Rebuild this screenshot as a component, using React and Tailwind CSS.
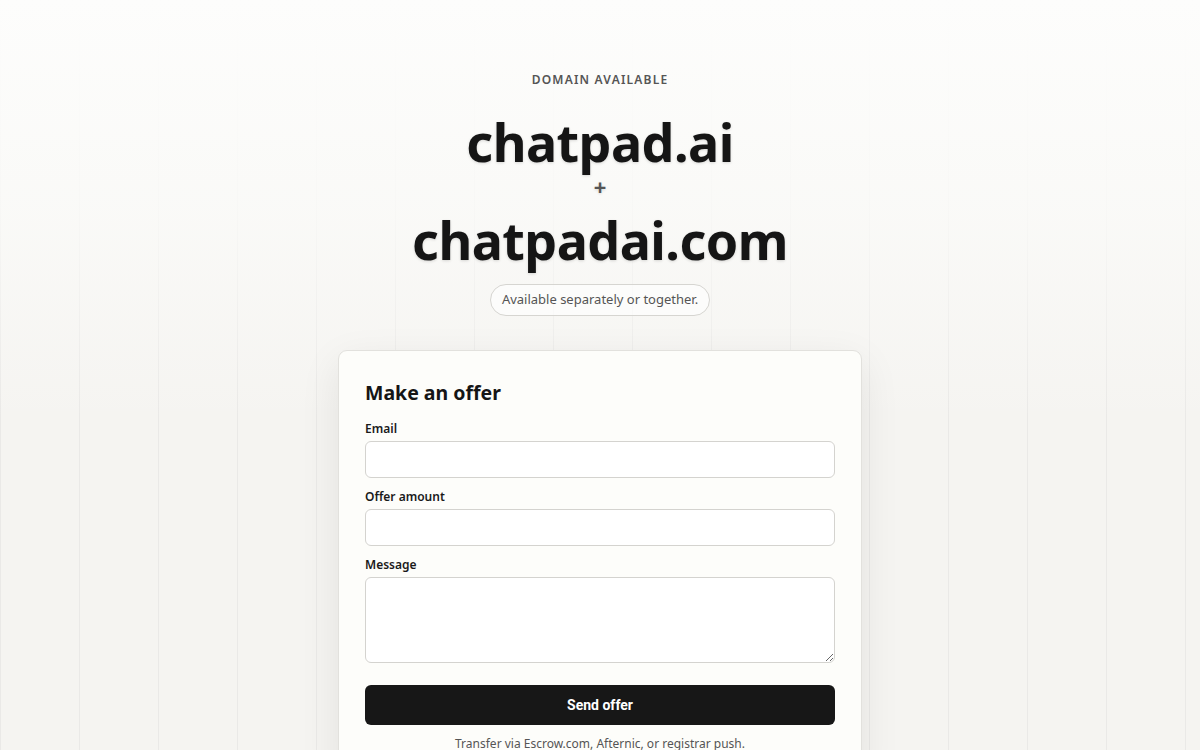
import React from 'react';

const Field = ({ label, children }) => (
    <div className="flex flex-col">
        <label className="text-[12px] font-semibold text-[#1a1a1a] leading-4 mb-[4px]">{label}</label>
        {children}
    </div>
);

export default function App() {
    return (
        <div
            className="relative min-h-[750px] h-[750px] overflow-hidden bg-[#f5f4f1] font-['Noto_Sans','Open_Sans',sans-serif]"
        >
            {/* column lines */}
            <div className="absolute inset-0 bg-[linear-gradient(to_right,rgba(0,0,0,0.045)_1px,transparent_1px)] bg-[length:79px_100%] bg-[position:79px_0]" />
            {/* top fade */}
            <div className="absolute inset-x-0 top-0 h-[420px] bg-gradient-to-b from-[#fdfdfc] via-[#fbfbf9]/80 to-transparent" />

            <main className="relative flex flex-col items-center pt-[72px]">
                <p className="text-[12px] font-semibold tracking-[0.1em] text-[#555] leading-4">DOMAIN AVAILABLE</p>

                <h1 className="mt-[28px] flex flex-col items-center text-[#151515] font-bold leading-none [text-shadow:0_1px_3px_rgba(0,0,0,0.14)]">
                    <span className="text-[52px] leading-[52px] tracking-[-0.01em]">chatpad.ai</span>
                    <span className="mt-[6px] text-[22px] leading-[24px] text-[#555]">+</span>
                    <span className="mt-[16px] text-[52px] leading-[52px] tracking-[-0.01em]">chatpadai.com</span>
                </h1>

                <span className="mt-[18px] px-[11px] h-[32px] flex items-center rounded-full border border-[#d6d5d1] bg-white/60 text-[13px] text-[#555]">
                    Available separately or together.
                </span>

                <section className="mt-[34px] w-[524px] rounded-[9px] border border-[#e2e1dd] bg-[#fdfdfa] shadow-[0_12px_40px_rgba(0,0,0,0.08)] px-[26px] pt-[28px] pb-[24px]">
                    <h2 className="text-[19.5px] font-bold text-[#151515] leading-7">Make an offer</h2>

                    <div className="mt-[14px] flex flex-col gap-[11px]">
                        <Field label="Email">
                            <input className="h-[37px] rounded-[6px] border border-[#d4d3cf] bg-white px-3 outline-none" />
                        </Field>
                        <Field label="Offer amount">
                            <input className="h-[37px] rounded-[6px] border border-[#d4d3cf] bg-white px-3 outline-none" />
                        </Field>
                        <Field label="Message">
                            <textarea className="h-[86px] rounded-[6px] border border-[#d4d3cf] bg-white px-3 py-2 outline-none" />
                        </Field>
                    </div>

                    <button className="mt-[22px] w-full h-[40px] rounded-[6px] bg-[#171717] text-white text-[14px] font-bold font-['Roboto',sans-serif]">
                        Send offer
                    </button>

                    <p className="mt-[11px] text-center text-[12px] leading-4 text-[#555]">
                        Transfer via Escrow.com, Afternic, or registrar push.
                    </p>
                </section>
            </main>
        </div>
    );
}
